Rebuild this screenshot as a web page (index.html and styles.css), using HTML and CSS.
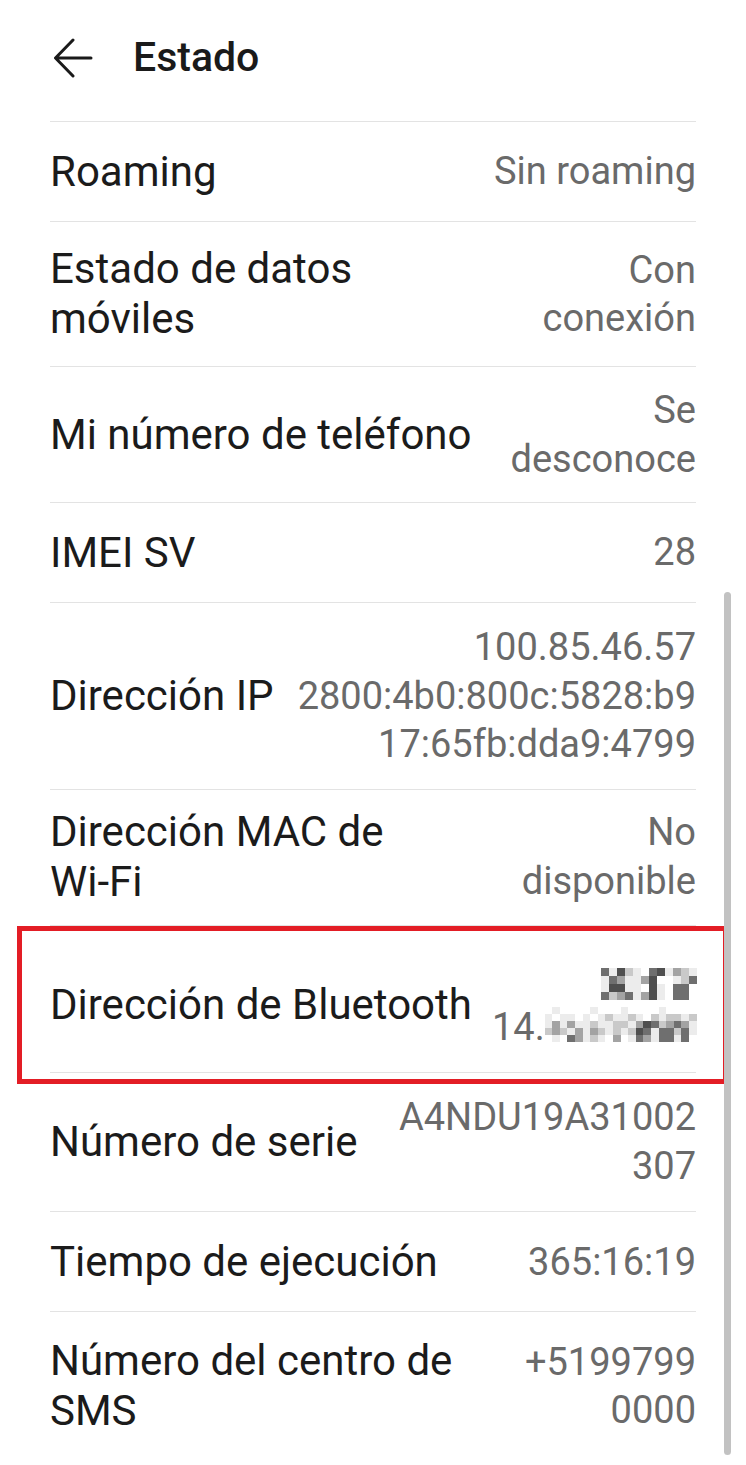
FILE: index.html
```html
<!DOCTYPE html>
<html lang="es">
<head>
<meta charset="utf-8">
<title>Estado</title>
<link rel="stylesheet" href="styles.css">
</head>
<body>
<div class="screen">
  <header class="topbar">
    <svg class="back" viewBox="0 0 40 40" width="40" height="40" aria-hidden="true">
      <path d="M38 20 H3 M20 2 L2.5 20 L20 38" fill="none" stroke="#1a1a1a" stroke-width="3" stroke-linecap="round" stroke-linejoin="round"/>
    </svg>
    <h1 class="title">Estado</h1>
  </header>

  <ul class="list">
    <li class="row pad-0"><span class="label">Roaming</span><span class="value">Sin roaming</span></li>
    <li class="row pad-22"><span class="label">Estado de datos<br>móviles</span><span class="value">Con<br>conexión</span></li>
    <li class="row pad-19"><span class="label">Mi número de teléfono</span><span class="value">Se<br>desconoce</span></li>
    <li class="row pad-0"><span class="label">IMEI SV</span><span class="value">28</span></li>
    <li class="row pad-20"><span class="label">Dirección IP</span><span class="value">100.85.46.57<br>2800:4b0:800c:5828:b9<br>17:65fb:dda9:4799</span></li>
    <li class="row pad-18"><span class="label">Dirección MAC de<br>Wi-Fi</span><span class="value">No<br>disponible</span></li>
    <li class="row pad-bt"><span class="label">Dirección de Bluetooth</span>
      <span class="value bt">
        <span class="mosaic m1">
          <i class="c4"></i><i class="c1"></i><i class="c5"></i><i class="c2"></i><i class="c1"></i><i class="c0"></i><i class="c4"></i><i class="c5"></i><i class="c1"></i><i class="c3"></i><i class="c2"></i><i class="c1"></i>
          <i class="c1"></i><i class="c4"></i><i class="c3"></i><i class="c1"></i><i class="c1"></i><i class="c3"></i><i class="c5"></i><i class="c0"></i><i class="c0"></i><i class="c1"></i><i class="c2"></i><i class="c4"></i>
          <i class="c1"></i><i class="c5"></i><i class="c5"></i><i class="c1"></i><i class="c1"></i><i class="c0"></i><i class="c5"></i><i class="c1"></i><i class="c0"></i><i class="c4"></i><i class="c4"></i><i class="c0"></i>
          <i class="c4"></i><i class="c2"></i><i class="c3"></i><i class="c4"></i><i class="c1"></i><i class="c3"></i><i class="c5"></i><i class="c1"></i><i class="c0"></i><i class="c4"></i><i class="c4"></i><i class="c0"></i>
        </span>
        <span class="bt-line2"><span class="bt-text">14.</span>
          <span class="mosaic m2">
            <i class="c0"></i><i class="c1"></i><i class="c0"></i><i class="c0"></i><i class="c0"></i><i class="c0"></i><i class="c1"></i><i class="c0"></i><i class="c0"></i><i class="c0"></i><i class="c1"></i><i class="c0"></i><i class="c0"></i><i class="c0"></i><i class="c0"></i><i class="c1"></i><i class="c0"></i><i class="c0"></i><i class="c0"></i><i class="c0"></i>
            <i class="c1"></i><i class="c0"></i><i class="c1"></i><i class="c1"></i><i class="c0"></i><i class="c1"></i><i class="c0"></i><i class="c1"></i><i class="c2"></i><i class="c1"></i><i class="c1"></i><i class="c2"></i><i class="c1"></i><i class="c0"></i><i class="c2"></i><i class="c1"></i><i class="c2"></i><i class="c2"></i><i class="c1"></i><i class="c2"></i>
            <i class="c1"></i><i class="c3"></i><i class="c1"></i><i class="c3"></i><i class="c1"></i><i class="c1"></i><i class="c2"></i><i class="c1"></i><i class="c1"></i><i class="c2"></i><i class="c2"></i><i class="c1"></i><i class="c3"></i><i class="c5"></i><i class="c4"></i><i class="c2"></i><i class="c3"></i><i class="c4"></i><i class="c3"></i><i class="c1"></i>
            <i class="c2"></i><i class="c3"></i><i class="c2"></i><i class="c1"></i><i class="c3"></i><i class="c1"></i><i class="c3"></i><i class="c2"></i><i class="c1"></i><i class="c2"></i><i class="c1"></i><i class="c2"></i><i class="c5"></i><i class="c4"></i><i class="c1"></i><i class="c4"></i><i class="c4"></i><i class="c2"></i><i class="c4"></i><i class="c1"></i>
            <i class="c0"></i><i class="c1"></i><i class="c0"></i><i class="c4"></i><i class="c3"></i><i class="c1"></i><i class="c2"></i><i class="c1"></i><i class="c0"></i><i class="c3"></i><i class="c0"></i><i class="c1"></i><i class="c4"></i><i class="c3"></i><i class="c1"></i><i class="c4"></i><i class="c4"></i><i class="c1"></i><i class="c4"></i><i class="c0"></i>
          </span>
        </span>
      </span>
    </li>
    <li class="row pad-19b"><span class="label">Número de serie</span><span class="value">A4NDU19A31002<br>307</span></li>
    <li class="row pad-0"><span class="label">Tiempo de ejecución</span><span class="value">365:16:19</span></li>
    <li class="row pad-25"><span class="label">Número del centro de<br>SMS</span><span class="value">+5199799<br>0000</span></li>
  </ul>

  <div class="highlight" aria-hidden="true"></div>
  <div class="scrollbar" aria-hidden="true"></div>
</div>
</body>
</html>
```
FILE: styles.css
```css
* { box-sizing: border-box; }

html, body {
  margin: 0;
  padding: 0;
  background: #ffffff;
}

body {
  font-family: Roboto, "Noto Sans", "Liberation Sans", sans-serif;
  color: #1b1b1b;
}

.screen {
  position: relative;
  width: 746px;
  min-height: 1465px;
  overflow: hidden;
}

.topbar {
  height: 121px;
  display: flex;
  align-items: center;
  padding: 0 0 6px 53px;
}

.back {
  flex: none;
  display: block;
}

.title {
  margin: 0 0 0 40px;
  font-size: 41px;
  font-weight: 500;
  color: #1a1a1a;
  line-height: 1;
}

.list {
  list-style: none;
  margin: 0 50px;
  padding: 0;
}

.row {
  display: flex;
  align-items: center;
  justify-content: space-between;
  gap: 20px;
  border-top: 1px solid #e3e3e3;
  min-height: 100px;
}

.pad-0 { padding: 0; }
.pad-18 { padding: 17px 0 18px; }
.pad-19 { padding: 19px 0; }
.pad-19b { padding: 20px 0 21px; }
.pad-20 { padding: 20px 0; }
.pad-22 { padding: 22px 0; }
.pad-25 { padding: 24px 0 26px; }
.pad-bt { padding: 42px 0 30px; }

.label {
  flex: 1 1 auto;
  font-size: 42px;
  line-height: 50px;
  color: #1b1b1b;
  white-space: nowrap;
}

.value {
  flex: none;
  text-align: right;
  font-size: 38px;
  line-height: 48.5px;
  color: #6a6a6a;
  white-space: nowrap;
}

.bt {
  display: flex;
  flex-direction: column;
  align-items: flex-end;
  gap: 7px;
  line-height: 1;
}

.bt-line2 {
  display: flex;
  align-items: flex-end;
}

.bt-text {
  font-size: 38px;
  line-height: 30px;
  color: #6a6a6a;
}

.mosaic {
  display: grid;
  grid-auto-rows: 8px;
}

.m1 { grid-template-columns: repeat(12, 8px); }
.m2 { grid-template-columns: repeat(20, 7.6px); grid-auto-rows: 7.2px; }

.mosaic i { display: block; }
.c0 { background: #ffffff; }
.c1 { background: #ececec; }
.c2 { background: #c9c9c9; }
.c3 { background: #a3a3a3; }
.c4 { background: #6f6f6f; }
.c5 { background: #4f4f4f; }

.highlight {
  position: absolute;
  left: 17px;
  top: 926px;
  width: 711px;
  height: 158px;
  border: 5px solid #e31d25;
  pointer-events: none;
}

.scrollbar {
  position: absolute;
  left: 724px;
  top: 592px;
  width: 7px;
  height: 863px;
  border-radius: 4px;
  background: #c2c2c2;
}
```
